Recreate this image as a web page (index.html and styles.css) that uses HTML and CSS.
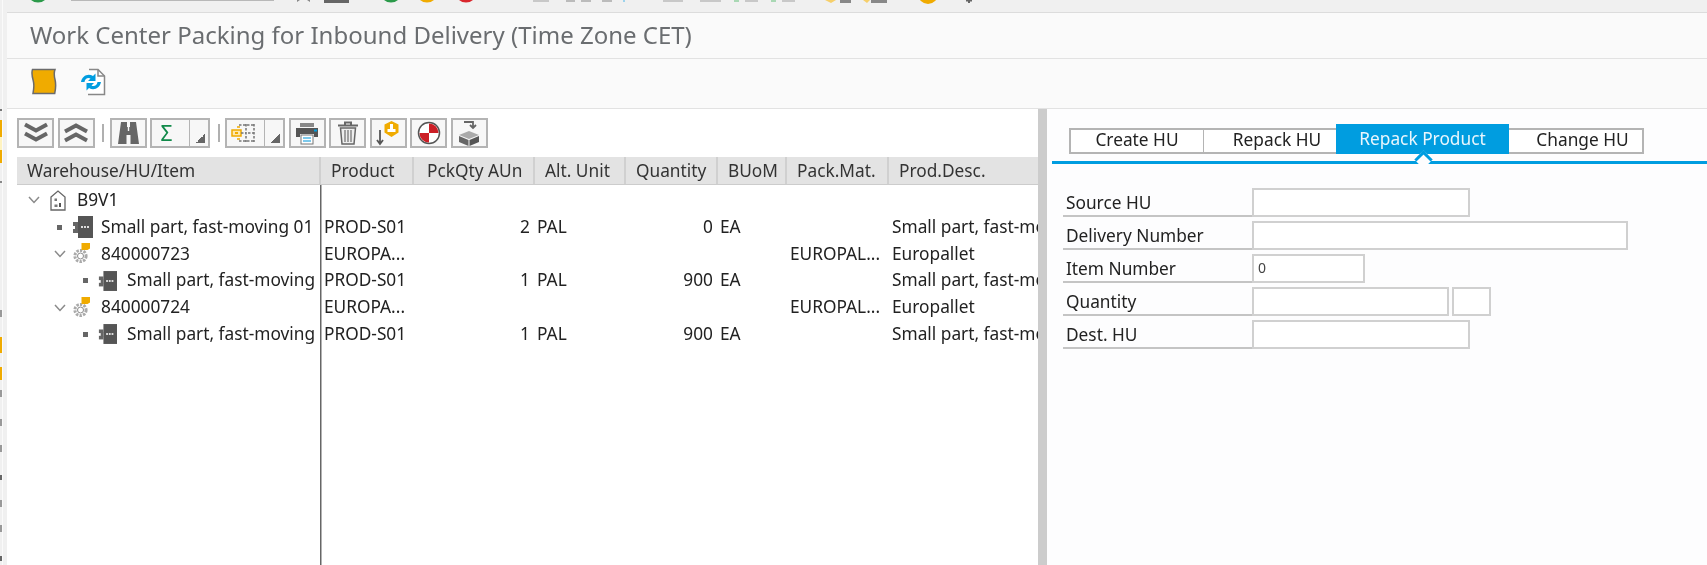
FILE: index.html
```html
<!DOCTYPE html>
<html lang="en">
<head>
<meta charset="utf-8">
<title>Work Center Packing for Inbound Delivery</title>
<link rel="stylesheet" href="styles.css">
</head>
<body>
<svg class="defs" xmlns="http://www.w3.org/2000/svg">
  <symbol id="item" viewBox="0 0 21 22">
    <rect x="6" y="0" width="15" height="22" fill="#555"/>
    <rect x="1" y="6" width="5" height="4" fill="#666"/>
    <rect x="1" y="13" width="5" height="4" fill="#666"/>
    <rect x="3" y="9" width="3" height="5" fill="#666"/>
    <path d="M9 11h8" stroke="#ddd" stroke-width="2" stroke-dasharray="2 1"/>
  </symbol>
  <symbol id="hu" viewBox="0 0 17 21">
    <circle cx="7.500" cy="13" r="5.600" fill="none" stroke="#aaa" stroke-width="3" stroke-dasharray="2.400 1.200"/>
    <circle cx="7.500" cy="13" r="3" fill="none" stroke="#8a8a8a" stroke-width="1"/>
    <path d="M8.500 0h8.500v5.500l-2.500 1.500H8.500z" fill="#f0ab00"/>
  </symbol>
  <symbol id="chev" viewBox="0 0 12 8">
    <path d="M1 1l5 5.500L11 1" fill="none" stroke="#8a8a8a" stroke-width="1.500"/>
  </symbol>
</svg>
<div class="window">
  <aside class="rail">
    <svg class="rail-art" width="7" height="565" viewBox="0 0 7 565" xmlns="http://www.w3.org/2000/svg">
      <rect width="7" height="565" fill="#f0f0f0"/>
      <rect x="2" width="1" height="565" fill="#fafafa"/>
      <rect y="109" width="2" height="2" fill="#777"/>
      <rect y="120" width="2" height="17" fill="#f0ab00"/>
      <rect y="137" width="2" height="13" fill="#fff3c0"/>
      <rect y="150" width="2" height="13" fill="#f0ab00"/>
      <rect y="181" width="2" height="2" fill="#888"/>
      <rect y="337" width="2" height="16" fill="#f0ab00"/>
      <rect y="367" width="2" height="13" fill="#f0ab00"/>
      <rect y="310" width="2" height="7" fill="#999"/>
      <rect y="390" width="2" height="7" fill="#999"/>
      <rect y="419" width="2" height="7" fill="#999"/>
      <rect y="445" width="2" height="7" fill="#999"/>
      <rect y="475" width="2" height="5" fill="#666"/>
      <rect y="500" width="2" height="7" fill="#999"/>
      <rect y="525" width="2" height="7" fill="#999"/>
      <rect y="556" width="2" height="5" fill="#666"/>
    </svg>
  </aside>
  <div class="content">
    <div class="sysbar">
      <svg class="sys-art" width="1700" height="12" viewBox="7 0 1700 12" xmlns="http://www.w3.org/2000/svg">
        <circle cx="38" cy="-8.500" r="11" fill="#2b9a4a"/>
        <rect x="71" y="0" width="203" height="1" fill="#b8b8b8"/>
        <path d="M297 2l3-2h-3zM307 0l3 2V0z" fill="#888"/>
        <rect x="324" y="0" width="25" height="3" fill="#666"/>
        <circle cx="391" cy="-8.500" r="11" fill="#2b9a4a"/>
        <circle cx="427" cy="-8.500" r="11" fill="#f0ab00"/>
        <circle cx="466" cy="-8.500" r="11" fill="#d9262c"/>
        <rect x="533" y="0" width="16" height="2" fill="#c8c8c8"/>
        <rect x="566" y="0" width="9" height="2" fill="#bbb"/>
        <rect x="581" y="0" width="10" height="2" fill="#bbb"/>
        <rect x="602" y="0" width="10" height="2" fill="#bbb"/>
        <rect x="623" y="0" width="2" height="2" fill="#9dd3ec"/>
        <rect x="663" y="0" width="20" height="2" fill="#c8c8c8"/>
        <rect x="700" y="0" width="21" height="2" fill="#c8c8c8"/>
        <rect x="734" y="0" width="5" height="2" fill="#a9d8b4"/>
        <rect x="745" y="0" width="13" height="2" fill="#c8c8c8"/>
        <rect x="771" y="0" width="5" height="2" fill="#a9d8b4"/>
        <rect x="782" y="0" width="13" height="2" fill="#c8c8c8"/>
        <path d="M825 0h11l-5 3z" fill="#f6cf6a"/>
        <rect x="840" y="0" width="11" height="3" fill="#888"/>
        <path d="M863 0h7l-3 3z" fill="#f6cf6a"/>
        <rect x="871" y="0" width="16" height="3" fill="#888"/>
        <circle cx="928" cy="-6" r="10" fill="#f0ab00"/>
        <rect x="966" y="0" width="6" height="1.500" fill="#666"/>
        <rect x="968" y="0" width="2" height="3" fill="#666"/>
      </svg>
    </div>
    <header class="titlebar"><h1 class="title">Work Center Packing for Inbound Delivery (Time Zone CET)</h1></header>
    <nav class="apptools">
      <svg class="app-ic scroll" width="26" height="27" viewBox="0 0 26 27" xmlns="http://www.w3.org/2000/svg">
        <path d="M1.500 1.500H24c-1.500 4-1 6 0 10s1 8-.3 14H2c1-5 1.300-9 .2-13S.2 5 1.500 1.500z" fill="#f0ab00" stroke="#6b6b6b" stroke-width="1.500"/>
      </svg>
      <svg class="app-ic" width="26" height="28" viewBox="0 0 26 28" xmlns="http://www.w3.org/2000/svg">
        <path d="M9 1.500h9l6.500 6.500v18.500H8" fill="#fff" stroke="#888" stroke-width="1.500"/>
        <path d="M18 1.500V8h6.500" fill="none" stroke="#888" stroke-width="1.500"/>
        <path d="M1 14c1-6 7-9 12-6l2.500-2.500V13H8l2.500-2.500C8 9 5 10.500 4.500 14z" fill="#009de0"/>
        <path d="M21 14c-1 6-7 9-12 6l-2.500 2.500V15H14l-2.500 2.500c2.500 1.500 5.500 0 6-3.500z" fill="#009de0"/>
      </svg>
    </nav>
    <main class="panes">
      <section class="left">
        <div class="toolbar">
          <button class="tbtn" type="button"><svg class="ic" width="26" height="22" viewBox="0 0 26 22"><path d="M2 2.500l11 6 11-6M2 11.500l11 6 11-6" fill="none" stroke="#666" stroke-width="4"/></svg></button>
          <button class="tbtn" type="button"><svg class="ic" width="26" height="22" viewBox="0 0 26 22"><path d="M2 9.500l11-6 11 6M2 18.500l11-6 11 6" fill="none" stroke="#666" stroke-width="4"/></svg></button>
          <span class="tsep"></span>
          <button class="tbtn" type="button"><svg class="ic" width="21" height="22" viewBox="0 0 21 22"><path d="M3 0h6v5h.8v4h1.400V5h.8V0h6l3 22h-8.500V13H8.500v9H0z" fill="#666"/></svg></button>
          <button class="tbtn split" type="button"><span class="sigma">Σ</span><span class="drop"></span></button>
          <span class="tsep"></span>
          <button class="tbtn split" type="button"><svg class="ic hier" width="26" height="22" viewBox="0 0 26 22"><rect x="1" y="8" width="9" height="6" fill="#fde8b0" stroke="#f0ab00" stroke-width="1.500"/><rect x="4" y="10" width="3" height="2" fill="#f0ab00"/><path d="M10 11h5M15 2v18M8 3h16M17 11h8M8 19h16M23 2v18" fill="none" stroke="#777" stroke-width="1.500" stroke-dasharray="2.500 1.500"/><path d="M6 5h3M6 17h3" stroke="#f0ab00" stroke-width="1.500"/></svg><span class="drop"></span></button>
          <button class="tbtn" type="button"><svg class="ic" width="24" height="24" viewBox="0 0 24 24"><path d="M5 2h14v4H5z" fill="#888"/><path d="M1 7h22v9h-4v-3H5v3H1z" fill="#555"/><rect x="19" y="8.500" width="3" height="2" fill="#009de0"/><rect x="6" y="14" width="12" height="9" fill="#fff" stroke="#777"/><path d="M8 17h8M8 20h8" stroke="#7cc9ec" stroke-width="2"/></svg></button>
          <button class="tbtn" type="button"><svg class="ic" width="22" height="24" viewBox="0 0 22 24"><path d="M1 4.500h20M8 4V1.500h6V4" fill="none" stroke="#666" stroke-width="2"/><path d="M3.500 7h15l-1.500 16H5z" fill="#eee" stroke="#666" stroke-width="1.500"/><path d="M8 9v12M11 9v12M14 9v12" stroke="#888" stroke-width="1.500"/></svg></button>
          <button class="tbtn" type="button"><svg class="ic" width="26" height="26" viewBox="0 0 26 26"><path d="M5 10v14M2 20l3 4 3-4" fill="none" stroke="#555" stroke-width="1.800"/><path d="M16.500 1l7 3.500v8L16.500 17l-7-4.500v-8z" fill="#f0ab00"/><rect x="15" y="4" width="3" height="6" fill="#fff"/><rect x="12.500" y="9" width="8" height="3" fill="#fff"/></svg></button>
          <button class="tbtn" type="button"><svg class="ic" width="24" height="24" viewBox="0 0 24 24"><circle cx="12" cy="12" r="10.500" fill="#fff" stroke="#555" stroke-width="1.500"/><path d="M12 12V2.500a9.500 9.500 0 0 1 9.500 9.500zM12 12v9.500A9.500 9.500 0 0 1 2.500 12z" fill="#cc1f26"/></svg></button>
          <button class="tbtn" type="button"><svg class="ic" width="24" height="26" viewBox="0 0 24 26"><path d="M7 2h9v5M13 5l3 3 3-3" fill="none" stroke="#666" stroke-width="1.800"/><path d="M12 11l10 4-10 4-10-4z" fill="#aaa"/><path d="M2 16l9.500 4v6L2 22z" fill="#666"/><path d="M22 16l-9.500 4v6l9.500-4z" fill="#555"/></svg></button>
        </div>
        <div class="grid head">
          <div class="hc hc-first">Warehouse/HU/Item</div>
          <div class="hc">Product</div>
          <div class="hc hc-qty">PckQty AUn</div>
          <div class="hc hc-alt">Alt. Unit</div>
          <div class="hc">Quantity</div>
          <div class="hc hc-buom">BUoM</div>
          <div class="hc">Pack.Mat.</div>
          <div class="hc">Prod.Desc.</div>
        </div>
        <div class="tbody">
          <div class="grid row">
            <div class="tree lv0"><svg class="exp" width="12" height="8"><use href="#chev"/></svg><svg class="house" width="16" height="21" viewBox="0 0 16 21"><path d="M1 7l7-6 7 6v13H1z" fill="#fff" stroke="#666" stroke-width="1.300"/><rect x="4.500" y="8.500" width="2.500" height="2.500" fill="#777"/><rect x="9" y="13" width="2" height="4" fill="#555"/><rect x="4.500" y="14.500" width="3" height="2.500" fill="#777"/></svg><span class="tx">B9V1</span></div>
            <div class="c"></div><div class="c"></div><div class="c"></div><div class="c"></div><div class="c"></div><div class="c"></div><div class="c"></div>
          </div>
          <div class="grid row">
            <div class="tree lv1-item"><i class="bul"></i><svg class="item" width="21" height="22"><use href="#item"/></svg><span class="tx">Small part, fast-moving 01</span></div>
            <div class="c">PROD-S01</div><div class="c num">2</div><div class="c unit">PAL</div><div class="c num">0</div><div class="c unit">EA</div><div class="c"></div><div class="c desc">Small part, fast-moving 01</div>
          </div>
          <div class="grid row">
            <div class="tree lv1-hu"><svg class="exp" width="12" height="8"><use href="#chev"/></svg><svg class="hu" width="17" height="21"><use href="#hu"/></svg><span class="tx">840000723</span></div>
            <div class="c">EUROPA...</div><div class="c"></div><div class="c"></div><div class="c"></div><div class="c"></div><div class="c">EUROPAL...</div><div class="c desc">Europallet</div>
          </div>
          <div class="grid row">
            <div class="tree lv2-item"><i class="bul"></i><svg class="item sub" width="19" height="22"><use href="#item"/></svg><span class="tx">Small part, fast-moving 01</span></div>
            <div class="c">PROD-S01</div><div class="c num">1</div><div class="c unit">PAL</div><div class="c num">900</div><div class="c unit">EA</div><div class="c"></div><div class="c desc">Small part, fast-moving 01</div>
          </div>
          <div class="grid row">
            <div class="tree lv1-hu"><svg class="exp" width="12" height="8"><use href="#chev"/></svg><svg class="hu" width="17" height="21"><use href="#hu"/></svg><span class="tx">840000724</span></div>
            <div class="c">EUROPA...</div><div class="c"></div><div class="c"></div><div class="c"></div><div class="c"></div><div class="c">EUROPAL...</div><div class="c desc">Europallet</div>
          </div>
          <div class="grid row">
            <div class="tree lv2-item"><i class="bul"></i><svg class="item sub" width="19" height="22"><use href="#item"/></svg><span class="tx">Small part, fast-moving 01</span></div>
            <div class="c">PROD-S01</div><div class="c num">1</div><div class="c unit">PAL</div><div class="c num">900</div><div class="c unit">EA</div><div class="c"></div><div class="c desc">Small part, fast-moving 01</div>
          </div>
        </div>
      </section>
      <div class="splitter"></div>
      <section class="right">
        <div class="tabstrip">
          <div class="tabs">
            <div class="tab t1">Create HU</div>
            <div class="tab t2">Repack HU</div>
            <div class="tab active">Repack Product</div>
            <div class="tab t4">Change HU</div>
          </div>
        </div>
        <form class="form">
          <div class="frow"><label class="lab">Source HU</label><input class="field w-hu" readonly></div>
          <div class="frow"><label class="lab">Delivery Number</label><input class="field w-del" readonly></div>
          <div class="frow"><label class="lab">Item Number</label><input class="field w-item" value="0" readonly></div>
          <div class="frow"><label class="lab">Quantity</label><input class="field w-qty" readonly><input class="field w-unit" readonly></div>
          <div class="frow"><label class="lab">Dest. HU</label><input class="field w-hu" readonly></div>
        </form>
      </section>
    </main>
  </div>
</div>
</body>
</html>
```

FILE: styles.css
```css
* { box-sizing: border-box; }
html, body { margin: 0; height: 565px; overflow: hidden; background: #fff; }
body { font-family: "Noto Sans", "Open Sans", sans-serif; font-size: 17.3px; color: #222; }
.defs { display: none; }
.window { display: flex; height: 565px; filter: blur(0.35px); }
.rail { flex: 0 0 7px; }
.rail-art, .sys-art { display: block; }
.content { flex: 1; min-width: 0; display: flex; flex-direction: column; }

.sysbar { height: 13px; background: #f0f0f0; border-bottom: 1px solid #dcdcdc; overflow: hidden; }
.titlebar { height: 46px; background: #fafafa; border-bottom: 1px solid #e2e2e2; display: flex; align-items: center; padding: 0 0 2px 23px; }
.title { margin: 0; font-size: 24px; font-weight: 400; color: #6a6d70; white-space: nowrap; }
.apptools { height: 50px; background: #fafafa; border-bottom: 1px solid #e2e2e2; display: flex; align-items: center; padding: 0 0 4px 24px; }
.app-ic { display: block; }
.app-ic.scroll { margin-right: 23px; }

.panes { flex: 1; min-height: 0; display: flex; }
.left { flex: 0 0 1031px; padding: 9px 0 0 10px; overflow: hidden; background: #fff; }
.splitter { flex: 0 0 9px; background: #ccc; }
.right { flex: 1; background: #fdfdfe; padding-left: 5px; }

.toolbar { height: 30px; display: flex; align-items: center; gap: 3.5px; }
.tbtn { flex: 0 0 37px; height: 30px; padding: 0; border: 2px solid #b4b4b4; background: #f7f7f7; display: flex; align-items: center; justify-content: center; font: inherit; }
.tbtn.split { flex-basis: 60px; justify-content: flex-start; position: relative; padding-left: 4px; }
.drop { margin-left: auto; width: 19px; height: 26px; border-left: 1px solid #b4b4b4; background: linear-gradient(to bottom right, transparent 0 50%, #666 50%) right 3px bottom 3px / 9px 9px no-repeat; }
.sigma { width: 21px; text-align: center; color: #118a4a; font-size: 21px; line-height: 1; }
.ic { display: block; }
.tsep { width: 2px; height: 18px; background: #b0b0b0; margin: 0 2px 0 4px; }

.grid { display: grid; grid-template-columns: 304px 93px 121px 91px 92px 69px 102px 149px; width: 1021px; }
.head { margin-top: 9px; height: 28px; background: #e3e3e3; border-bottom: 1px solid #ccc; }
.hc { padding-left: 10px; line-height: 28px; border-right: 2px solid #d0d0d0; white-space: nowrap; overflow: hidden; color: #333; }
.hc:last-child { border-right: 0; }
.hc-first { padding-left: 10px; }
.hc-qty { padding-left: 13px; }
.tbody { padding-top: 2px; height: 381px; background: linear-gradient(#666, #666) 303px 0 / 1.5px 100% no-repeat; }
.row { height: 26.8px; line-height: 26.8px; }
.c { padding-left: 3px; white-space: nowrap; overflow: hidden; color: #222; }
.c.num { text-align: right; padding: 0 5px 0 0; }
.c.unit { padding-left: 2px; }
.c.desc { padding-left: 3px; }
.tree { display: flex; align-items: center; overflow: hidden; white-space: nowrap; width: 303px; }
.tree svg, .bul { flex: none; display: block; }
.tx { flex: none; }
.lv0 { padding-left: 11px; }
.lv0 .exp { margin-right: 10px; }
.lv0 .house { margin-right: 11px; }
.lv1-item { padding-left: 40px; }
.lv1-hu { padding-left: 37px; }
.lv1-hu .exp { margin-right: 7px; }
.lv1-hu .hu { margin-right: 11px; }
.lv2-item { padding-left: 66px; }
.bul { width: 5px; height: 5px; background: #666; margin-right: 10px; }
.item { margin-right: 8px; }
.item.sub { margin-right: 10px; }

.tabstrip { height: 55px; padding: 15px 0 0 17px; border-bottom: 3px solid #009de0; position: relative; }
.tabs { display: flex; align-items: flex-end; height: 30px; }
.tab { height: 26px; line-height: 20px; border: 2px solid #b4b4b4; border-left: 0; border-right: 0; background: #fff; text-align: center; color: #222; }
.t1 { width: 135px; border-left: 2px solid #b4b4b4; border-right: 1px solid #b4b4b4; }
.t2 { width: 132px; padding-left: 14px; }
.t4 { width: 135px; padding-left: 14px; border-right: 2px solid #b4b4b4; }
.tab.active { width: 173px; height: 30px; line-height: 29px; border: 0; background: #009de0; color: #e8f6fd; position: relative; }
.tab.active::after { content: ""; position: absolute; left: 81px; bottom: -12px; width: 10px; height: 10px; background: #fdfdfe; border-top: 3px solid #009de0; border-left: 3px solid #009de0; transform: rotate(45deg); }

.form { margin: 24px 0 0 11px; }
.frow { display: flex; height: 29px; margin-bottom: 4px; }
.lab { width: 189px; height: 29px; border-bottom: 2px solid #c4c4c4; padding: 2px 0 0 3px; line-height: 26px; color: #222; white-space: nowrap; }
.field { height: 29px; padding: 0 0 2px 4px; border: 2px solid #d0d0d0; background: #fff; font: 14px "Noto Sans", sans-serif; color: #444; outline: 0; display: block; }
.w-hu { width: 218px; }
.w-del { width: 376px; }
.w-item { width: 113px; }
.w-qty { width: 197px; }
.w-unit { width: 39px; margin-left: 3px; }
```
